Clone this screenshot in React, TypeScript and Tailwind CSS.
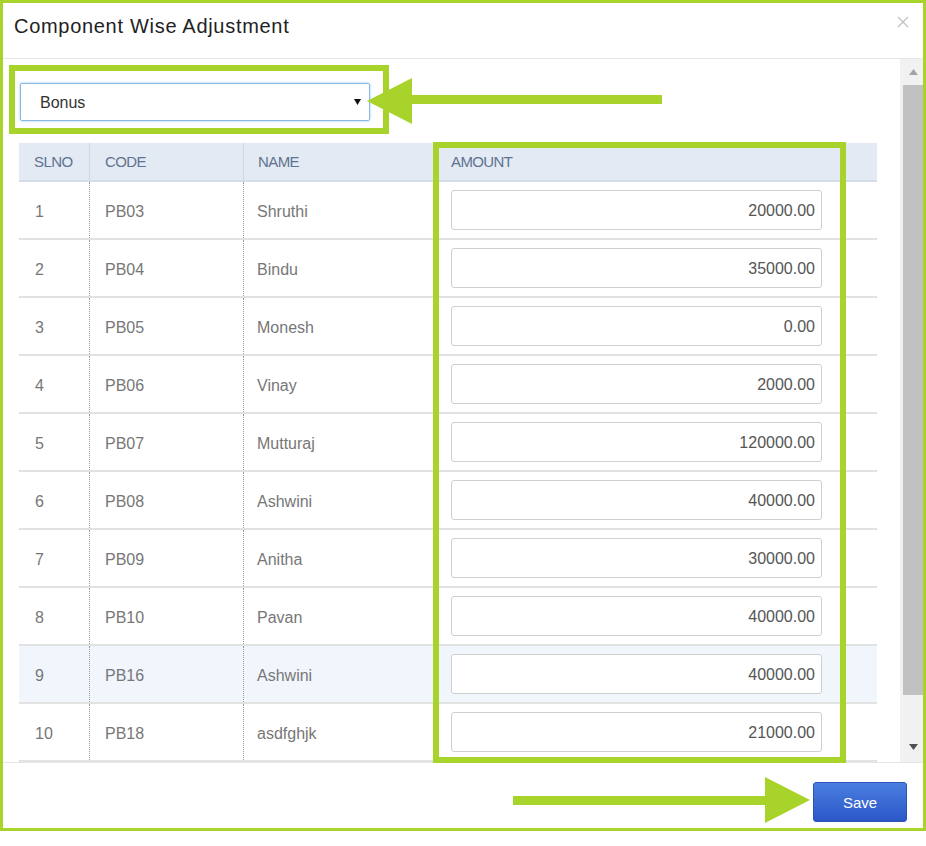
import React from "react";

const rows = [
  ["1", "PB03", "Shruthi", "20000.00"],
  ["2", "PB04", "Bindu", "35000.00"],
  ["3", "PB05", "Monesh", "0.00"],
  ["4", "PB06", "Vinay", "2000.00"],
  ["5", "PB07", "Mutturaj", "120000.00"],
  ["6", "PB08", "Ashwini", "40000.00"],
  ["7", "PB09", "Anitha", "30000.00"],
  ["8", "PB10", "Pavan", "40000.00"],
  ["9", "PB16", "Ashwini", "40000.00"],
  ["10", "PB18", "asdfghjk", "21000.00"],
];

export default function App() {
  return (
    <div
      className="relative w-[926px] h-[846px] bg-white overflow-hidden"
      style={{ fontFamily: '"Liberation Sans", Arial, sans-serif' }}
    >
      <div className="w-[926px] h-[831px] border-[3px] border-[#a8d32b] flex flex-col">
        {/* Header */}
        <div className="h-[56px] border-b border-[#e6e6e6] flex items-center justify-between pl-[11px] pr-[14px] shrink-0">
          <div className="text-[20px] text-[#222] tracking-[0.7px] pb-[10px]">Component Wise Adjustment</div>
          <svg width="12" height="12" viewBox="0 0 12 12" className="mb-[18px]">
            <path d="M1 1L11 11M11 1L1 11" stroke="#c4c4c4" strokeWidth="1.4" />
          </svg>
        </div>
        {/* Body */}
        <div className="h-[703px] flex shrink-0">
          <div className="flex-1 overflow-hidden pl-[16px] pt-[24px]">
            <div className="w-[350px] h-[38px] ml-[1px] border border-[#86b7e6] rounded-[2px] shadow-[0_0_3px_rgba(102,175,233,0.6)] flex items-center justify-between pl-[19px] pr-[8px]">
              <span className="text-[16px] text-[#333] pt-[1px]">Bonus</span>
              <svg width="7" height="6" viewBox="0 0 7 6">
                <path d="M0 0H7L3.5 6Z" fill="#111" />
              </svg>
            </div>
            <div className="mt-[22px] w-[858px]">
              <div className="flex h-[39px] bg-[#e3eaf3] border-b-2 border-[#d3dce8] text-[15px] text-[#5e7391] tracking-[-0.6px]">
                <div className="w-[71px] pl-[15px] pt-[8px] border-r border-[#cdd8e5]">SLNO</div>
                <div className="w-[154px] pl-[15px] pt-[8px] border-r border-[#cdd8e5]">CODE</div>
                <div className="w-[191px] pl-[14px] pt-[8px]">NAME</div>
                <div className="flex-1 pl-[16px] pt-[8px]">AMOUNT</div>
              </div>
              {rows.map((r, i) => (
                <div
                  key={i}
                  className={
                    "flex h-[58px] border-b-2 border-[#e2e2e2] text-[16px] text-[#777] " +
                    (i === 8 ? "bg-[#f1f6fd]" : "bg-white")
                  }
                >
                  <div className="w-[71px] pl-[16px] pt-[3px] flex items-center border-r border-dotted border-[#9a9a9a]">{r[0]}</div>
                  <div className="w-[154px] pl-[15px] pt-[3px] flex items-center border-r border-dotted border-[#9a9a9a]">{r[1]}</div>
                  <div className="w-[191px] pl-[13px] pt-[3px] flex items-center">{r[2]}</div>
                  <div className="flex-1 pl-[16px] flex items-center">
                    <div className="w-[371px] h-[40px] bg-white border border-[#cfcfcf] rounded-[3px] flex items-center justify-end pr-[6px] pt-[2px] text-[16px] text-[#555]">
                      {r[3]}
                    </div>
                  </div>
                </div>
              ))}
            </div>
          </div>
          {/* Scrollbar */}
          <div className="w-[23px] bg-[#f1f1f1] flex flex-col items-end shrink-0">
            <div className="h-[26px] w-[20px] flex items-center justify-center">
              <svg width="9" height="6" viewBox="0 0 9 6">
                <path d="M0 6H9L4.5 0Z" fill="#a3a3a3" />
              </svg>
            </div>
            <div className="h-[610px] w-[20px] bg-[#c1c1c1]" />
            <div className="flex-1 w-[20px] flex items-end justify-center pb-[12px]">
              <svg width="9" height="6" viewBox="0 0 9 6">
                <path d="M0 0H9L4.5 6Z" fill="#505050" />
              </svg>
            </div>
          </div>
        </div>
        {/* Footer */}
        <div className="flex-1 border-t border-[#e6e6e6] flex items-start justify-end pr-[16px] pt-[19px]">
          <button className="w-[94px] h-[40px] rounded-[3px] border border-[#2d53b8] bg-gradient-to-b from-[#4b7ee0] to-[#2b57c7] text-white text-[15px] pt-[2px]">
            Save
          </button>
        </div>
      </div>

      {/* Annotations */}
      <div className="absolute left-[9px] top-[65px] w-[380px] h-[69px] border-[6px] border-[#a8d32b]" />
      <div className="absolute left-[433px] top-[142px] w-[413px] h-[621px] border-[6px] border-[#a8d32b]" />
      <svg className="absolute left-0 top-0" width="926" height="846" viewBox="0 0 926 846">
        <rect x="410" y="95" width="252" height="9" fill="#a8d32b" />
        <polygon points="367,101 412,78 412,124" fill="#a8d32b" />
        <rect x="513" y="796" width="255" height="9" fill="#a8d32b" />
        <polygon points="810,800 765,777 765,823" fill="#a8d32b" />
      </svg>
    </div>
  );
}
